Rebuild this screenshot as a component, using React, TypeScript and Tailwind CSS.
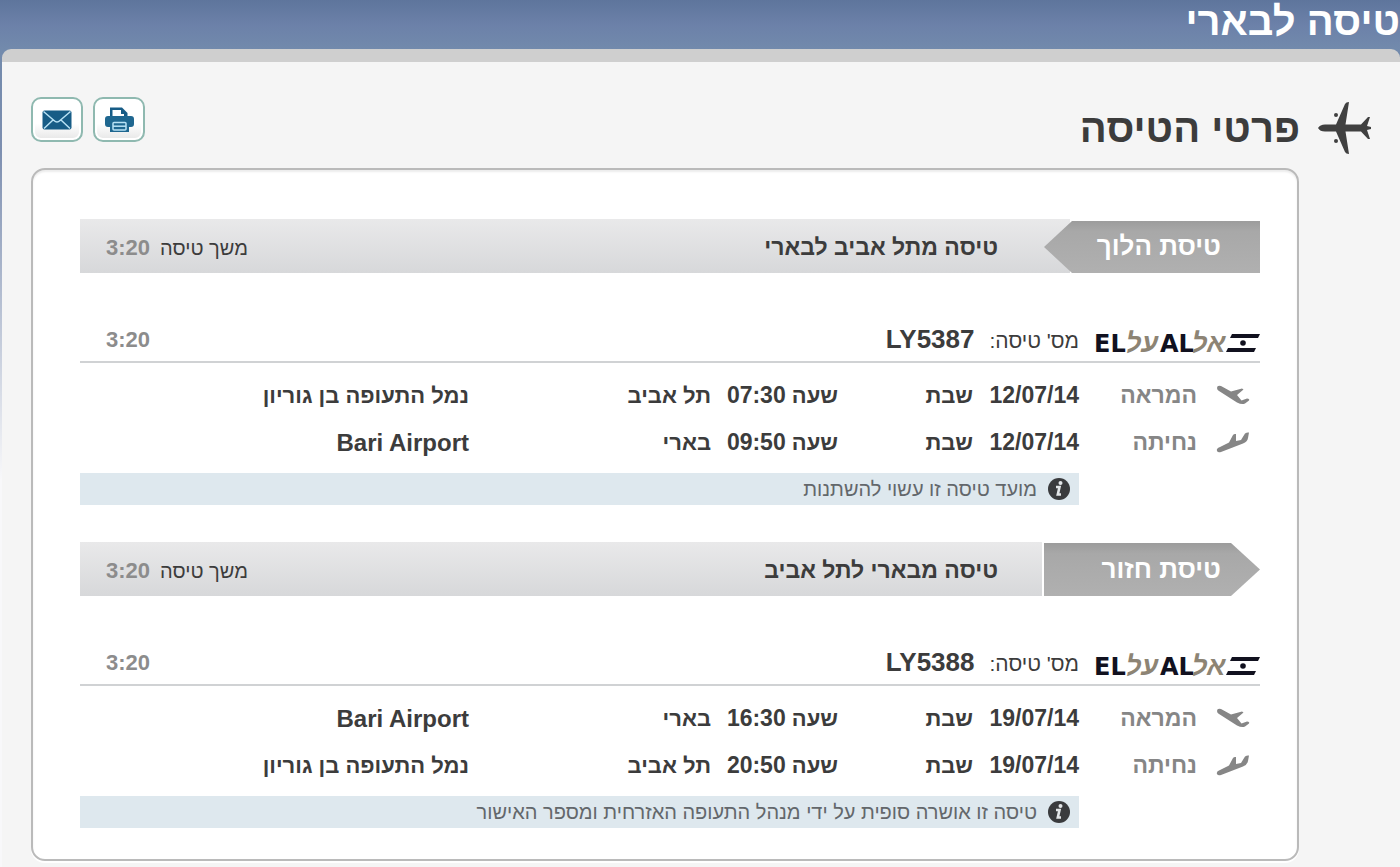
import type { ReactNode } from "react";
import { clsx } from "clsx";

type Leg = {
  kind: "takeoff" | "landing";
  label: string;
  date: string;
  day: string;
  time: string;
  city: string;
  airport: string;
};

type Flight = {
  direction: "out" | "back";
  tag: string;
  title: string;
  duration: string;
  number: string;
  legs: Leg[];
  note: string;
};

const flights: Flight[] = [
  {
    direction: "out",
    tag: "טיסת הלוך",
    title: "טיסה מתל אביב לבארי",
    duration: "3:20",
    number: "LY5387",
    legs: [
      { kind: "takeoff", label: "המראה", date: "12/07/14", day: "שבת", time: "07:30", city: "תל אביב", airport: "נמל התעופה בן גוריון" },
      { kind: "landing", label: "נחיתה", date: "12/07/14", day: "שבת", time: "09:50", city: "בארי", airport: "Bari Airport" },
    ],
    note: "מועד טיסה זו עשוי להשתנות",
  },
  {
    direction: "back",
    tag: "טיסת חזור",
    title: "טיסה מבארי לתל אביב",
    duration: "3:20",
    number: "LY5388",
    legs: [
      { kind: "takeoff", label: "המראה", date: "19/07/14", day: "שבת", time: "16:30", city: "בארי", airport: "Bari Airport" },
      { kind: "landing", label: "נחיתה", date: "19/07/14", day: "שבת", time: "20:50", city: "תל אביב", airport: "נמל התעופה בן גוריון" },
    ],
    note: "טיסה זו אושרה סופית על ידי מנהל התעופה האזרחית ומספר האישור",
  },
];

export default function App() {
  return (
    <div
      dir="rtl"
      className="min-h-screen bg-[linear-gradient(to_bottom,#5e759c_0px,#6c81a9_25px,#728aac_49px,#7d8fb0_150px,#f8f8fa_480px)] font-['Liberation_Sans',Arial,sans-serif] text-[#3c3c3c]"
    >
      <header className="h-[49px]">
        <h1 className="pt-px text-[40px] leading-[40px] font-bold text-white">טיסה לבארי</h1>
      </header>

      <main className="ml-[2px] min-h-[818px] rounded-t-[9px] border-t-[13px] border-[#cfcfcf] bg-[#f5f5f5] pb-[6px]">
        <div className="flex h-[106px] items-start justify-between px-[29px] pt-[35px]">
          <div className="flex items-center gap-[18px] pt-[4px]">
            <PlaneIcon />
            <h2 className="text-[40px] leading-[54px] font-bold">פרטי הטיסה</h2>
          </div>
          <div className="flex gap-[10px]">
            <ToolButton label="הדפסה">
              <PrintIcon />
            </ToolButton>
            <ToolButton label="שליחה במייל">
              <MailIcon />
            </ToolButton>
          </div>
        </div>

        <div className="mr-[101px] ml-[29px] rounded-[14px] border-2 border-[#bababa] bg-white pt-[49px] pr-[37px] pb-[31px] pl-[47px] shadow-[0_2px_0_#fff,inset_0_2px_2px_#ececec]">
          <div className="flex flex-col gap-[37px]">
            {flights.map((flight) => (
              <FlightSection key={flight.number} flight={flight} />
            ))}
          </div>
        </div>
      </main>
    </div>
  );
}

function FlightSection({ flight }: { flight: Flight }) {
  const out = flight.direction === "out";

  return (
    <section>
      {/* Banner */}
      <div className="flex h-[54px] items-stretch">
        <div
          className={clsx(
            "z-10 flex w-[216px] shrink-0 items-center bg-linear-to-b from-[#9c9c9c] via-[#a8a8a8] via-20% to-[#b0b0b0] pr-[39px] text-[26px] font-bold text-white",
            out
              ? "mt-[2px] pb-[2px] [clip-path:polygon(0_50%,28px_0,100%_0,100%_100%,28px_100%)]"
              : "mt-[1px] [clip-path:polygon(0_0,187px_0,100%_50%,187px_100%,0_100%)]"
          )}
        >
          {flight.tag}
        </div>
        <div
          className={clsx(
            "flex grow items-center justify-between bg-linear-to-b from-[#e9e9ea] to-[#d7d8da] pt-[2px] pl-[26px]",
            out ? "-mr-[26px] pr-[72px]" : "mr-[2px] pr-[44px]"
          )}
        >
          <h3 className="text-[23px] font-bold">{flight.title}</h3>
          <div className="flex items-baseline gap-[10px]">
            <span className="text-[20px]">משך טיסה</span>
            <span className="text-[22px] font-bold text-[#8c8c8c]">{flight.duration}</span>
          </div>
        </div>
      </div>

      {/* Airline and flight number */}
      <div className="flex h-[90px] items-center border-b-2 border-[#d0d2d4] pt-[44px] pl-[26px]">
        <div className="w-[181px] shrink-0 pt-[8px]">
          <ElAlLogo />
        </div>
        <div className="flex grow items-baseline gap-[15px]">
          <span className="text-[21px]">מס' טיסה:</span>
          <span className="text-[26px] font-bold">{flight.number}</span>
        </div>
        <span className="text-[22px] font-bold text-[#8c8c8c]">{flight.duration}</span>
      </div>

      <table className="mt-[9px] w-full table-fixed text-right text-[22px] font-bold">
        <colgroup>
          <col className="w-[181px]" />
          <col className="w-[106px]" />
          <col className="w-[135px]" />
          <col className="w-[127px]" />
          <col className="w-[242px]" />
          <col />
        </colgroup>
        <tbody>
          {flight.legs.map((leg) => (
            <tr key={leg.kind} className="h-[47px]">
              <th scope="row" className="pr-[10px] text-[23px] text-[#868686]">
                <span className="flex items-center gap-[19px]">
                  {leg.kind === "takeoff" ? <TakeoffIcon /> : <LandingIcon />}
                  {leg.label}
                </span>
              </th>
              <td className="text-[23px]">{leg.date}</td>
              <td>{leg.day}</td>
              <td>
                שעה <span className="text-[23px]">{leg.time}</span>
              </td>
              <td>{leg.city}</td>
              <td className={clsx(/^[A-Z]/.test(leg.airport) && "text-[24px]")}>{leg.airport}</td>
            </tr>
          ))}
        </tbody>
      </table>

      <p className="mt-[7px] mr-[181px] flex h-[32px] items-center gap-[11px] bg-[#dee8ee] pr-[9px] text-[20px] text-[#63676b]">
        <InfoIcon />
        {flight.note}
      </p>
    </section>
  );
}

function ToolButton({ label, children }: { label: string; children: ReactNode }) {
  return (
    <button
      type="button"
      aria-label={label}
      className="flex h-[45px] w-[52px] items-center justify-center rounded-[10px] border-2 border-[#8fb9b0] bg-linear-to-b from-white from-60% to-[#e6e6e6] shadow-[inset_0_0_0_2px_#fff]"
    >
      {children}
    </button>
  );
}

function MailIcon() {
  return (
    <svg width="30" height="20" viewBox="0 0 30 20" fill="none" aria-hidden="true">
      <rect x="0.5" y="0.5" width="29" height="19" rx="2" fill="#175c86" />
      <path d="M1.500 1.500 12 10.500Q15 13.500 18 10.500L28.500 1.500M2 18.500 11 10M28 18.500 19 10" stroke="#b9e2f5" strokeWidth="1.500" />
    </svg>
  );
}

function PrintIcon() {
  return (
    <svg width="29" height="26" viewBox="0 0 29 26" fill="none" aria-hidden="true">
      <path d="M5 10V0.500H17L22.500 6V10Z" fill="#175c86" />
      <path d="M7.500 9V3H16V7H19V9Z" fill="#fff" />
      <path d="M3 9H26Q29 9 29 12V17Q29 20 26 20H24V25H5V20H3Q0 20 0 17V12Q0 9 3 9Z" fill="#1f6790" />
      <rect x="8" y="15.500" width="13" height="7.500" rx="1" fill="#1f6790" stroke="#b9e2f5" strokeWidth="1.500" />
      <path d="M8 19.200H21" stroke="#b9e2f5" strokeWidth="1.500" />
    </svg>
  );
}

function PlaneIcon() {
  return (
    <svg width="53" height="52" viewBox="0 0 53 52" fill="#404040" aria-hidden="true">
      <path d="M0 26Q2 22.500 7 22.500H18L27 2Q28 0 31 0L27.500 22.500H43L50 15H52L49 24L53 25V27L49 28L52 37H50L43 29.500H27.500L31 52Q28 52 27 50L18 29.500H7Q2 29.500 0 26Z" />
      <circle cx="18" cy="13" r="2" />
      <circle cx="18" cy="39" r="2" />
    </svg>
  );
}

function TakeoffIcon() {
  return (
    <svg width="34" height="21" viewBox="0 0 34 21" fill="#868686" aria-hidden="true">
      <path d="M1 3Q1 0 5 1L15 6.500L26 3.500L27.500 4.500L21 10L25.500 15.500L31 13.500Q34 14 33 15.500L29 18.500Q26 20 21 17.500L3 6Q1 5 1 3Z" />
    </svg>
  );
}

function LandingIcon() {
  return (
    <svg width="34" height="21" viewBox="0 0 34 21" fill="#868686" aria-hidden="true">
      <path d="M1 19Q0 16.500 4 15L13 10.500L17 3Q18 1.500 20 2L20 9L25 8L29 1.500Q31 0 33 0.500L32 6Q31.500 9.500 27 11.500L5 20Q2 21 1 19Z" />
    </svg>
  );
}

function InfoIcon() {
  return (
    <svg width="22" height="22" viewBox="0 0 22 22" fill="none" aria-hidden="true">
      <circle cx="11" cy="11" r="11" fill="#3a3b3d" />
      <circle cx="12.500" cy="5" r="2" fill="#e3e6e8" />
      <path d="M8 9H11.500L9.800 16.500H13" stroke="#e3e6e8" strokeWidth="2.600" />
    </svg>
  );
}

function ElAlLogo() {
  return (
    <svg width="167" height="32" viewBox="0 0 167 32" direction="ltr" role="img" aria-label="EL AL" className="font-['DejaVu_Sans',sans-serif] text-[24px] font-bold">
      <g fill="#8d8474" className="font-['Liberation_Sans',sans-serif] text-[27px] italic">
        <text x="33" y="25">על</text>
        <text x="99" y="25">אל</text>
      </g>
      <g fill="#11111f">
        <text x="1" y="25">EL</text>
        <text x="67" y="25">AL</text>
        <path d="M139 7H167L165 11H137ZM135 21H163L161 25H133Z" />
        <circle cx="150" cy="16" r="2.800" />
      </g>
    </svg>
  );
}
